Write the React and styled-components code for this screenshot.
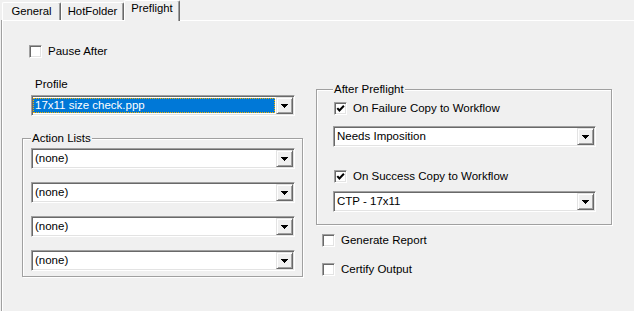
import React from 'react';
import styled, { createGlobalStyle } from 'styled-components';

const GlobalStyle = createGlobalStyle`
  html, body {
    margin: 0;
    padding: 0;
    background: #f0f0f0;
  }
  body {
    font-family: "Liberation Sans", Arial, sans-serif;
    font-size: 11.5px;
    line-height: 13px;
    color: #000;
  }
  * {
    box-sizing: border-box;
  }
`;

const Window = styled.div`
  width: 634px;
  height: 311px;
  overflow: hidden;
  display: flex;
  flex-direction: column;
  background: #f0f0f0;
`;

const TabStrip = styled.div`
  display: flex;
  align-items: flex-end;
  height: 20px;
  padding-left: 2px;
  position: relative;
  z-index: 1;
`;

const Tab = styled.div`
  width: ${p => p.$width}px;
  height: ${p => (p.$active ? 21 : 18)}px;
  margin-bottom: ${p => (p.$active ? -1 : 0)}px;
  padding-top: ${p => (p.$active ? 1 : 2)}px;
  display: flex;
  justify-content: center;
  align-items: flex-start;
  font-size: 11.3px;
  background: #f0f0f0;
  border-top: 1px solid #fff;
  border-left: 1px solid #fff;
  border-right: 1px solid #696969;
  box-shadow: inset -1px 0 #a0a0a0;
  border-radius: 2px 2px 0 0;
`;

const Panel = styled.div`
  flex: 1;
  margin-left: 2px;
  border-top: 1px solid #fff;
  border-left: 1px solid #fff;
  box-shadow: -1px 0 #a0a0a0;
  display: flex;
  align-items: flex-start;
  gap: 13px;
  padding: 24px 0 0 19px;
`;

const Column = styled.div`
  display: flex;
  flex-direction: column;
  align-items: flex-start;
  width: ${p => p.$width}px;
  margin-top: ${p => p.$top || 0}px;
`;

const CheckRow = styled.label`
  display: flex;
  align-items: center;
  gap: 6px;
  height: 13px;
  margin-left: ${p => p.$left || 0}px;
  margin-top: ${p => p.$top || 0}px;
  white-space: nowrap;
`;

const CheckSquare = styled.span`
  width: 13px;
  height: 13px;
  flex: none;
  display: flex;
  align-items: center;
  justify-content: center;
  background: #fff;
  border: 1px solid;
  border-color: #a0a0a0 #fff #fff #a0a0a0;
  box-shadow: inset 1px 1px #696969, inset -1px -1px #e3e3e3;
`;

const Label = styled.div`
  margin-left: ${p => p.$left || 0}px;
  margin-top: ${p => p.$top || 0}px;
`;

const ComboBox = styled.div`
  width: ${p => p.$width}px;
  height: 21px;
  flex: none;
  display: flex;
  margin-left: ${p => p.$left || 0}px;
  margin-top: ${p => p.$top || 0}px;
  padding: 1px;
  background: #fff;
  border: 1px solid;
  border-color: #a0a0a0 #fff #fff #a0a0a0;
  box-shadow: inset 1px 1px #696969, inset -1px -1px #e3e3e3;
`;

const ComboValue = styled.div`
  flex: 1;
  margin: 1px 1px 1px 0;
  padding-left: 2px;
  line-height: 13px;
  display: flex;
  align-items: center;
  white-space: nowrap;
  overflow: hidden;
  color: ${p => (p.$selected ? '#fff' : '#000')};
  background: ${p => (p.$selected ? '#0078d7' : 'transparent')};
  outline: ${p => (p.$selected ? '1px dotted #f2b200' : 'none')};
  outline-offset: -1px;
`;

const DropButton = styled.div`
  width: 17px;
  flex: none;
  display: flex;
  align-items: center;
  justify-content: center;
  background: #f0f0f0;
  border: 1px solid;
  border-color: #e3e3e3 #696969 #696969 #e3e3e3;
  box-shadow: inset 1px 1px #fff, inset -1px -1px #a0a0a0;
`;

const GroupBox = styled.fieldset`
  margin: ${p => p.$top || 0}px 0 0 0;
  width: ${p => p.$width}px;
  min-width: 0;
  padding: ${p => p.$pad};
  border: 1px solid #a0a0a0;
  box-shadow: inset 1px 1px #fff, 1px 1px #fff;
  display: flex;
  flex-direction: column;
  align-items: flex-start;
`;

const Caption = styled.legend`
  padding: 0 1px;
  line-height: 13px;
  background: #f0f0f0;
`;

const Arrow = () => (
  <svg width="7" height="4" viewBox="0 0 7 4" shapeRendering="crispEdges">
    <polygon points="0,0 7,0 3.5,4" fill="#000" />
  </svg>
);

const Tick = () => (
  <svg width="9" height="9" viewBox="0 0 9 9">
    <polyline points="1.3,4.2 3.4,6.5 7.9,1.8" fill="none" stroke="#000" strokeWidth="2" />
  </svg>
);

const Check = ({ checked, label, left, top }) => (
  <CheckRow $left={left} $top={top}>
    <CheckSquare>{checked && <Tick />}</CheckSquare>
    {label}
  </CheckRow>
);

const Combo = ({ value, selected, width, left, top }) => (
  <ComboBox $width={width} $left={left} $top={top}>
    <ComboValue $selected={selected}>{value}</ComboValue>
    <DropButton>
      <Arrow />
    </DropButton>
  </ComboBox>
);

const tabs = [
  { name: 'General', width: 59 },
  { name: 'HotFolder', width: 63 },
  { name: 'Preflight', width: 56, active: true },
];

const actionLists = ['(none)', '(none)', '(none)', '(none)'];

export default function App() {
  return (
    <>
      <GlobalStyle />
      <Window>
        <TabStrip>
          {tabs.map(t => (
            <Tab key={t.name} $width={t.width} $active={t.active}>
              {t.name}
            </Tab>
          ))}
        </TabStrip>
        <Panel>
          <Column $width={281}>
            <Check label="Pause After" left={7} />
            <Label $left={13} $top={20}>Profile</Label>
            <Combo value="17x11 size check.ppp" selected width={264} left={9} top={4} />
            <GroupBox $top={16} $width={281} $pad="3px 7px 5px 8px">
              <Caption>Action Lists</Caption>
              {actionLists.map((v, i) => (
                <Combo key={i} value={v} width={264} top={i === 0 ? 0 : 13} />
              ))}
            </GroupBox>
          </Column>
          <Column $width={296} $top={38}>
            <GroupBox $width={296} $pad="6px 15px 12px 16px">
              <Caption>After Preflight</Caption>
              <Check checked label="On Failure Copy to Workflow" left={1} />
              <Combo value="Needs Imposition" width={263} top={11} />
              <Check checked label="On Success Copy to Workflow" left={1} top={23} />
              <Combo value="CTP - 17x11" width={263} top={8} />
            </GroupBox>
            <Check label="Generate Report" left={6} top={9} />
            <Check label="Certify Output" left={6} top={16} />
          </Column>
        </Panel>
      </Window>
    </>
  );
}
